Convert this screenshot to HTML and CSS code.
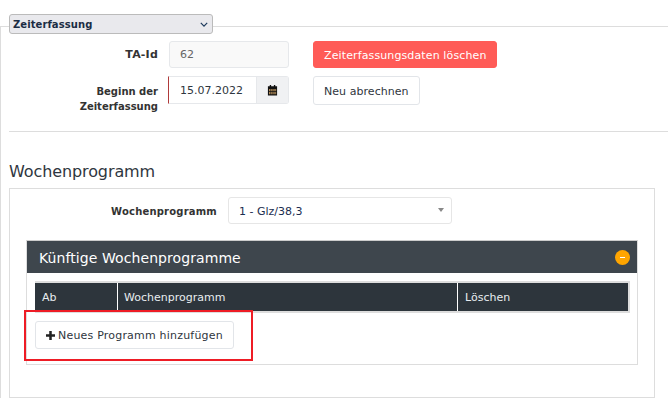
FILE: index.html
```html
<!DOCTYPE html>
<html lang="de">
<head>
<meta charset="utf-8">
<title>Zeiterfassung</title>
<link rel="stylesheet" href="styles.css">
</head>
<body>
<fieldset class="section">
  <legend class="section-legend">
    <span class="legend-select">Zeiterfassung
      <svg class="chevron" viewBox="0 0 10 6" width="8" height="5"><path d="M1 1l4 4 4-4" fill="none" stroke="#1d3a5c" stroke-width="1.5"/></svg>
    </span>
  </legend>
  <div class="top-form">
    <div class="fields">
      <div class="field-row row-id">
        <label class="field-label label-id">TA-Id</label>
        <div class="input input-readonly">62</div>
      </div>
      <div class="field-row row-date">
        <label class="field-label">Beginn der Zeiterfassung</label>
        <div class="date-group">
          <div class="date-value">15.07.2022</div>
          <div class="date-addon">
            <svg viewBox="0 0 12 12" width="11" height="12"><path d="M1 2h2V.5h1.5V2h3V.5H9V2h2v10H1z" fill="#111"/><path d="M2.2 5h1.6v2.2H2.2zM4.6 5h1.5v2.2H4.6zM6.9 5h1.5v2.2H6.9zM9 5h1v2.2H9zM2.2 8h1.6v2.6H2.2zM4.6 8h1.5v2.6H4.6zM6.9 8h1.5v2.6H6.9zM9 8h1v2.6H9z" fill="#b08a58"/></svg>
          </div>
        </div>
      </div>
    </div>
    <div class="actions">
      <button class="btn btn-danger">Zeiterfassungsdaten löschen</button>
      <button class="btn btn-default">Neu abrechnen</button>
    </div>
  </div>
  <hr class="divider">
  <h2 class="heading">Wochenprogramm</h2>
  <div class="box">
    <div class="program-row">
      <label class="program-label">Wochenprogramm</label>
      <div class="select">
        <span class="select-text">1 - Glz/38,3</span>
        <span class="select-caret"></span>
      </div>
    </div>
    <div class="panel">
      <div class="panel-header">
        <span class="panel-title">Künftige Wochenprogramme</span>
        <span class="collapse-btn"><span class="collapse-minus"></span></span>
      </div>
      <div class="panel-body">
        <table class="table">
          <thead>
            <tr><th class="col-ab">Ab</th><th class="col-prog">Wochenprogramm</th><th>Löschen</th></tr>
          </thead>
        </table>
        <button class="btn btn-default btn-add">
          <svg viewBox="0 0 10 10" width="9" height="9"><path d="M3.6 0h2.8v3.6H10v2.8H6.4V10H3.6V6.4H0V3.6h3.6z" fill="#222"/></svg>
          Neues Programm hinzufügen
        </button>
        <div class="highlight"></div>
      </div>
    </div>
  </div>
</fieldset>
</body>
</html>
```

FILE: styles.css
```css
* { box-sizing: border-box; }
html, body { margin: 0; padding: 0; background: #fff; }
body {
  width: 668px;
  height: 408px;
  overflow: hidden;
  font-family: "DejaVu Sans", sans-serif;
  font-size: 11px;
  color: #2f3640;
}
.section {
  margin: 14px 0 0 0;
  padding: 0 0 0 8px;
  border: 0;
  border-top: 1px solid #ddd;
  border-left: 1px solid #ddd;
  min-width: 0;
}
.section-legend { padding: 0 0 4px; margin: 0; }
.legend-select {
  display: flex;
  align-items: center;
  justify-content: space-between;
  width: 204px;
  height: 20px;
  padding: 0 4px 0 3px;
  background: #e9e9ed;
  border: 1px solid #bbb;
  border-radius: 3px;
  font-size: 10px;
  letter-spacing: 0.08px;
  font-weight: bold;
  color: #1b2d44;
}
.top-form {
  display: flex;
  padding-top: 3px;
  height: 93px;
}
.fields { width: 280px; }
.field-row { display: flex; }
.row-id { height: 35px; }
.field-label {
  width: 149px;
  text-align: right;
  font-size: 10px;
  font-weight: bold;
  line-height: 15px;
  padding-left: 50px;
  margin-right: 11px;
  color: #333;
}
.label-id {
  font-size: 11px;
  letter-spacing: 0.2px;
}
.row-id .field-label { line-height: 28px; }
.row-date .field-label { padding-top: 8px; }
.input {
  width: 120px;
  height: 27px;
  line-height: 25px;
  padding-left: 10px;
  border: 1px solid #e6e8eb;
  border-radius: 3px;
}
.input-readonly { background: #f9f9f9; color: #666; }
.date-group {
  display: flex;
  width: 121px;
  height: 28px;
  margin-left: -1px;
  border: 1px solid #e6e8eb;
  border-left: 1px solid #b03a3a;
  border-radius: 0 3px 3px 0;
}
.date-value { flex: 1; line-height: 28px; padding-left: 11px; }
.date-addon {
  width: 32px;
  display: flex;
  align-items: center;
  justify-content: center;
  background: #f0f1f3;
  border-left: 1px solid #e6e8eb;
}
.actions {
  display: flex;
  flex-direction: column;
  align-items: flex-start;
  gap: 8px;
  margin-left: 24px;
}
.btn {
  font-family: inherit;
  font-size: 11px;
  letter-spacing: 0.12px;
  border-radius: 3px;
  padding: 1px 10px 0;
  height: 29px;
  cursor: pointer;
}
.btn-danger {
  height: 27px;
  background: #ff5b57;
  border: 1px solid #ff5b57;
  color: #fff;
}
.btn-default {
  background: #fff;
  border: 1px solid #e2e5e9;
  color: #2f3640;
  letter-spacing: 0.05px;
}
.divider {
  margin: 0;
  height: 0;
  border: 0;
  border-top: 1px solid #ddd;
}
.heading {
  margin: 30px 0 0 0;
  font-size: 16px;
  letter-spacing: -0.1px;
  font-weight: normal;
  line-height: 19px;
  color: #2f3640;
}
.box {
  width: 646px;
  height: 210px;
  margin-top: 7px;
  padding: 8px 16px 0;
  border: 1px solid #ddd;
}
.program-row {
  display: flex;
  align-items: center;
}
.program-label {
  width: 191px;
  padding-top: 2px;
  text-align: right;
  font-size: 10px;
  letter-spacing: 0.2px;
  font-weight: bold;
  margin-right: 11px;
  color: #333;
}
.select {
  display: flex;
  justify-content: space-between;
  align-items: center;
  width: 224px;
  height: 27px;
  padding: 0 10px;
  border: 1px solid #e6e6e6;
  border-radius: 3px;
  color: #1b2d50;
}
.select-text { padding-top: 2px; }
.select-caret {
  width: 0;
  height: 0;
  border-left: 3px solid transparent;
  border-right: 3px solid transparent;
  border-top: 4px solid #888;
  margin-right: -3px;
  margin-top: -2px;
}
.panel {
  width: 612px;
  height: 125px;
  margin-top: 16px;
  border: 1px solid #ddd;
  border-top: 1px solid #ccc;
}
.panel-header {
  display: flex;
  justify-content: space-between;
  align-items: center;
  height: 32px;
  padding: 0 7px 0 12px;
  background: #3e464d;
  color: #fff;
}
.panel-title { font-size: 14px; letter-spacing: 0.08px; padding-top: 2px; }
.collapse-btn {
  display: flex;
  align-items: center;
  justify-content: center;
  width: 15px;
  height: 15px;
  border-radius: 50%;
  background: #ffa500;
}
.collapse-minus { width: 5px; height: 1px; background: #fff; }
.panel-body { position: relative; padding: 8px 8px 0; }
.table {
  width: 595px;
  border-collapse: separate;
  border-spacing: 0;
  border-left: 0;
  border-right: 2px solid #ddd;
  table-layout: fixed;
  border-top: 2px solid #ddd;
  border-bottom: 2px solid #ddd;
}
.table th {
  height: 28px;
  padding: 0 7px;
  background: #2d353c;
  color: #e8edf0;
  font-weight: normal;
  text-align: left;
  border-left: 1px solid #fff;
}
.table th:first-child { border-left: 0; }
.table .col-prog { width: 340px; padding-left: 6px; }
.col-ab { width: 82px; }
.btn-add {
  display: flex;
  align-items: center;
  gap: 3px;
  margin-top: 8px;
  width: 199px;
  height: 28px;
  letter-spacing: 0.2px;
}
.highlight {
  position: absolute;
  left: -3px;
  top: 37px;
  width: 229px;
  height: 51px;
  border: 2px solid #ee1c25;
}
```
